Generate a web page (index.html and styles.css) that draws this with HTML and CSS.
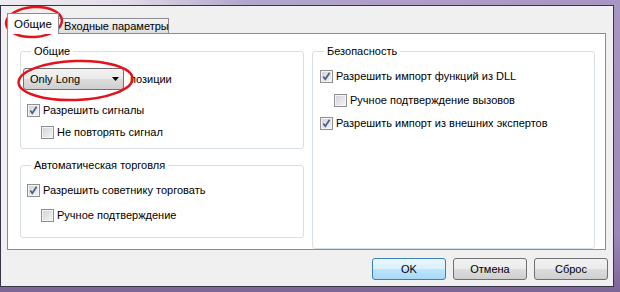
FILE: index.html
```html
<!DOCTYPE html>
<html lang="ru">

<head>
    <meta charset="UTF-8" />
    <title>Свойства эксперта</title>
    <link rel="stylesheet" href="styles.css">
</head>

<body>
    <div class="dlg">
        <div class="tabs">
            <div class="tab tab-active">Общие</div>
            <div class="tab">Входные параметры</div>
        </div>

        <div class="panel">
            <div class="col">
                <fieldset class="group">
                    <legend>Общие</legend>
                    <div class="combo-row">
                        <div class="combo">
                            <span>Only Long</span>
                            <svg width="7" height="4" viewBox="0 0 7 4"><polygon points="0,0 7,0 3.5,4" fill="#000" /></svg>
                        </div>
                        <span class="combo-label">позиции</span>
                    </div>
                    <label class="row first"><span class="cb checked"></span>Разрешить сигналы</label>
                    <label class="row sub gap9"><span class="cb"></span>Не повторять сигнал</label>
                </fieldset>

                <fieldset class="group group-auto">
                    <legend>Автоматическая торговля</legend>
                    <label class="row"><span class="cb checked"></span>Разрешить советнику торговать</label>
                    <label class="row sub gap12"><span class="cb"></span>Ручное подтверждение</label>
                </fieldset>
            </div>

            <fieldset class="group group-safe">
                <legend>Безопасность</legend>
                <label class="row"><span class="cb checked"></span>Разрешить импорт функций из DLL</label>
                <label class="row sub gap11"><span class="cb"></span>Ручное подтверждение вызовов</label>
                <label class="row gap10"><span class="cb checked"></span>Разрешить импорт из внешних экспертов</label>
            </fieldset>
        </div>

        <div class="buttons">
            <button class="btn btn-default">OK</button>
            <button class="btn">Отмена</button>
            <button class="btn">Сброс</button>
        </div>
    </div>

    <!-- red marks drawn over the screenshot -->
    <svg class="marks" width="620" height="292" viewBox="0 0 620 292">
        <ellipse cx="34" cy="22" rx="28" ry="15" transform="rotate(-4 34 22)" />
        <ellipse cx="75.5" cy="80.5" rx="57" ry="19.5" transform="rotate(-2 75.5 80.5)" />
    </svg>
</body>

</html>
```

FILE: styles.css
```css
* {
    box-sizing: border-box;
}

body {
    margin: 0;
    width: 620px;
    height: 292px;
    overflow: hidden;
    position: relative;
    font-family: 'Liberation Sans', Arial, sans-serif;
    font-size: 11px;
    color: #000;
    background:
        linear-gradient(to right, #eeecf1 0, #e2dce8 20%, #b3a5cb 40%, #a795c3 100%) top / 100% 5px no-repeat,
        linear-gradient(#a897c4, #9c89b9 80%, #7b6596);
}

.dlg {
    margin: 5px 6px 0 0;
    width: 614px;
    height: 282px;
    border: 1px solid #3b3448;
    background: #f0f0f0;
    padding: 7px 7px 0 6px;
}

.tabs {
    display: flex;
    align-items: flex-end;
    height: 20px;
}

.tab {
    height: 15px;
    width: 111px;
    margin-left: -1px;
    padding: 1px 0 0 5px;
    line-height: 13px;
    border: 1px solid #898c95;
    border-bottom: none;
    background: linear-gradient(#f4f4f4, #ebebeb 50%, #dcdcdc);
    white-space: nowrap;
}

.tab-active {
    position: relative;
    z-index: 1;
    width: 52px;
    height: 21px;
    margin: 0 0 -1px 0;
    padding: 4px 0 0 0;
    text-align: center;
    font-size: 11.5px;
    background: #fff;
}

.panel {
    height: 217px;
    border: 1px solid #898c95;
    background: #fff;
    padding: 11px 10px 0 12px;
    display: grid;
    grid-template-columns: 284px 283px;
    column-gap: 8px;
    align-items: stretch;
}

.col {
    display: flex;
    flex-direction: column;
    gap: 10px;
}

.group {
    margin: 0;
    min-width: 0;
    border: 1px solid #d5dfe5;
    border-radius: 3px;
    padding: 10px 0 9px 6px;
}

.group legend {
    margin-left: 4px;
    padding: 0 3px;
    line-height: 13px;
}

.group-auto {
    padding-top: 12px;
    padding-bottom: 15px;
}

.group-safe {
    padding-top: 12px;
    padding-left: 7px;
}

.combo-row {
    display: flex;
    align-items: center;
    margin-left: -4px;
}

.combo {
    width: 101px;
    height: 22px;
    border: 1px solid #707070;
    border-radius: 3px;
    background: linear-gradient(#f2f2f2, #ebebeb 50%, #dddddd 50%, #cfcfcf);
    display: flex;
    align-items: center;
    justify-content: space-between;
    padding: 0 4px 0 6px;
}

.combo-label {
    margin-left: 6px;
}

.row {
    display: flex;
    align-items: center;
    gap: 3px;
    height: 13px;
    line-height: 13px;
    white-space: nowrap;
}

.row.first {
    margin-top: 14px;
}

.row.sub {
    margin-left: 14px;
}

.gap9 {
    margin-top: 9px;
}

.gap10 {
    margin-top: 10px;
}

.gap11 {
    margin-top: 11px;
}

.gap12 {
    margin-top: 12px;
}

.cb {
    flex: none;
    width: 13px;
    height: 13px;
    border: 1px solid #8e8f8f;
    background: linear-gradient(135deg, #cdd1d7, #f6f6f6);
    box-shadow: inset 0 0 0 1px #f4f4f4;
}

.cb.checked {
    background:
        url("data:image/svg+xml,%3Csvg xmlns='http://www.w3.org/2000/svg' width='11' height='11'%3E%3Cpath d='M2.3 5.6 L4.3 8.2 L8.6 1.8' fill='none' stroke='%234a5c8c' stroke-width='1.7'/%3E%3C/svg%3E") center / 11px 11px no-repeat,
        linear-gradient(135deg, #cdd1d7, #f6f6f6);
}

.buttons {
    display: flex;
    justify-content: flex-end;
    gap: 7px;
    margin: 8px -2px 0 0;
}

.btn {
    width: 74px;
    height: 22px;
    padding: 0;
    font: inherit;
    color: #000;
    border: 1px solid #707070;
    border-radius: 3px;
    background: linear-gradient(#f2f2f2, #ebebeb 50%, #dddddd 50%, #cfcfcf);
}

.btn-default {
    border-color: #3c7fb1;
    background: linear-gradient(#eaf6fd, #d9f0fc 50%, #bee6fd 50%, #a7d9f5);
}

.marks {
    position: absolute;
    top: 0;
    left: 0;
    pointer-events: none;
}

.marks ellipse {
    fill: none;
    stroke: #e3121c;
    stroke-width: 2.5;
}
```
